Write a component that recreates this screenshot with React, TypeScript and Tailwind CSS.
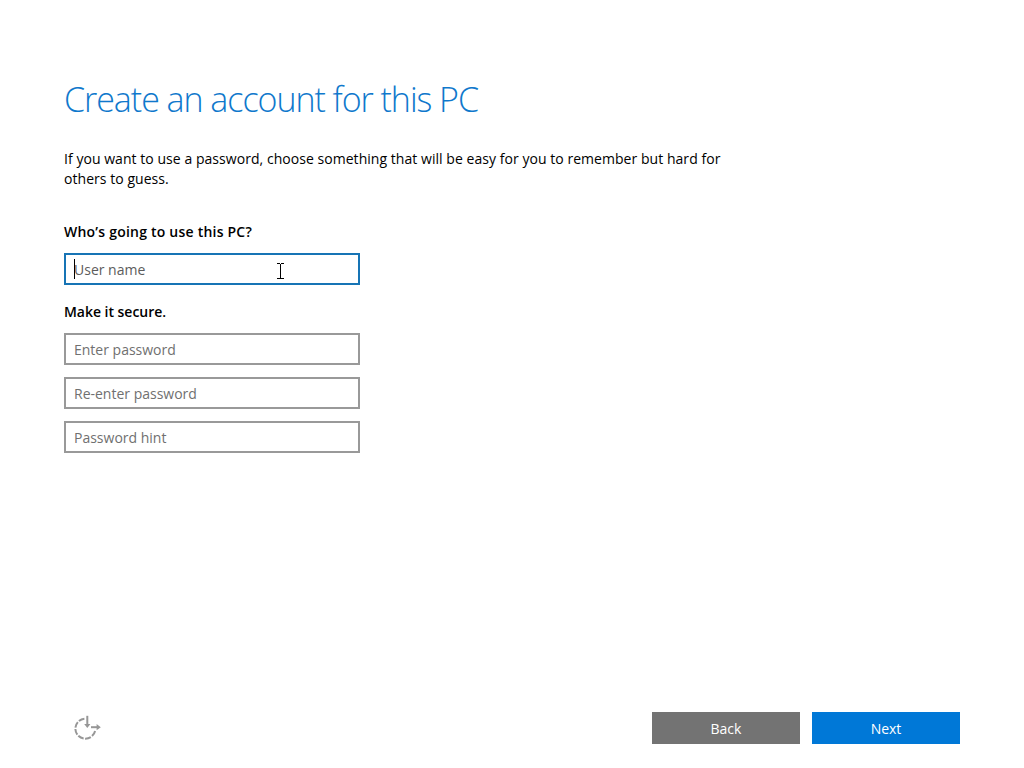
import React, { useState } from 'react';
import clsx from 'clsx';

interface FieldProps {
  label: string;
  type?: string;
  focused?: boolean;
  className?: string;
}

function Field({ label, type = 'text', focused = false, className }: FieldProps) {
  const [value, setValue] = useState('');

  return (
    <div className="relative w-[296px] h-8">
      <input
        type={type}
        value={value}
        onChange={(e) => setValue(e.target.value)}
        placeholder={label}
        aria-label={label}
        className={clsx(
          'block w-full h-8 border-2 bg-white px-2 pt-px text-[14px] leading-5 text-black outline-none',
          focused ? 'border-[#1774b5] placeholder:text-[#5c5c5c]' : 'border-[#999999] placeholder:text-[#707070]',
          className
        )}
      />
      {focused && (
        <>
          {/* Text caret */}
          <span className="absolute left-[10px] top-[6px] w-px h-5 bg-black" />
          {/* Mouse I-beam */}
          <svg className="absolute left-[212px] top-[10px]" width="9" height="17" viewBox="0 0 9 17" fill="none" stroke="#000" shapeRendering="crispEdges">
            <path d="M1 .5h3M5 .5h3M4.5 1v15M1 15.5h3M5 15.5h3" />
          </svg>
        </>
      )}
    </div>
  );
}

// Ease of access glyph: dashed dial with two arrows
function EaseOfAccessIcon() {
  return (
    <svg width="32" height="32" viewBox="0 0 32 32" fill="none" stroke="#979797" strokeWidth="2">
      <path d="M12.4 6.7A10 10 0 1 0 23.2 18.5" strokeDasharray="6 1.5" />
      <path d="M15.3 3.8v9" />
      <path d="M12.2 12h6.2l-3.1 4z" fill="#979797" stroke="none" />
      <path d="M19 15.2h6" />
      <path d="M24.6 12.1v6.2l4.2-3.1z" fill="#979797" stroke="none" />
    </svg>
  );
}

export default function App() {
  return (
    <div className="flex flex-col w-[1024px] h-[768px] overflow-hidden bg-white px-16 pt-[75px] pb-6 font-['Open_Sans','Noto_Sans',sans-serif] text-black">
      <h1 className="h-12 text-[34px] leading-[48px] font-light tracking-[-1.05px] text-[#0f78cc] whitespace-nowrap">
        Create an account for this PC
      </h1>

      <p className="mt-[26px] text-[14px] leading-5 tracking-[0.045px] whitespace-nowrap">
        If you want to use a password, choose something that will be easy for you to remember but hard for
        <br />
        others to guess.
      </p>

      <h2 className="mt-[33px] text-[14px] leading-5 font-semibold tracking-[0.22px]">Who’s going to use this PC?</h2>
      <div className="mt-[11px]">
        <Field label="User name" focused />
      </div>

      <h2 className="mt-[17px] text-[14px] leading-5 font-semibold tracking-[-0.03px]">Make it secure.</h2>
      <div className="mt-[11px] flex flex-col gap-3">
        <Field label="Enter password" type="password" />
        <Field label="Re-enter password" type="password" />
        <Field label="Password hint" />
      </div>

      <div className="mt-auto flex items-center h-8">
        <button aria-label="Ease of Access" className="ml-2">
          <EaseOfAccessIcon />
        </button>
        <div className="ml-auto flex gap-3 text-[14px] text-white">
          <button className="w-[148px] h-8 bg-[#737373]">Back</button>
          <button className="w-[148px] h-8 bg-[#0078d7]">Next</button>
        </div>
      </div>
    </div>
  );
}
